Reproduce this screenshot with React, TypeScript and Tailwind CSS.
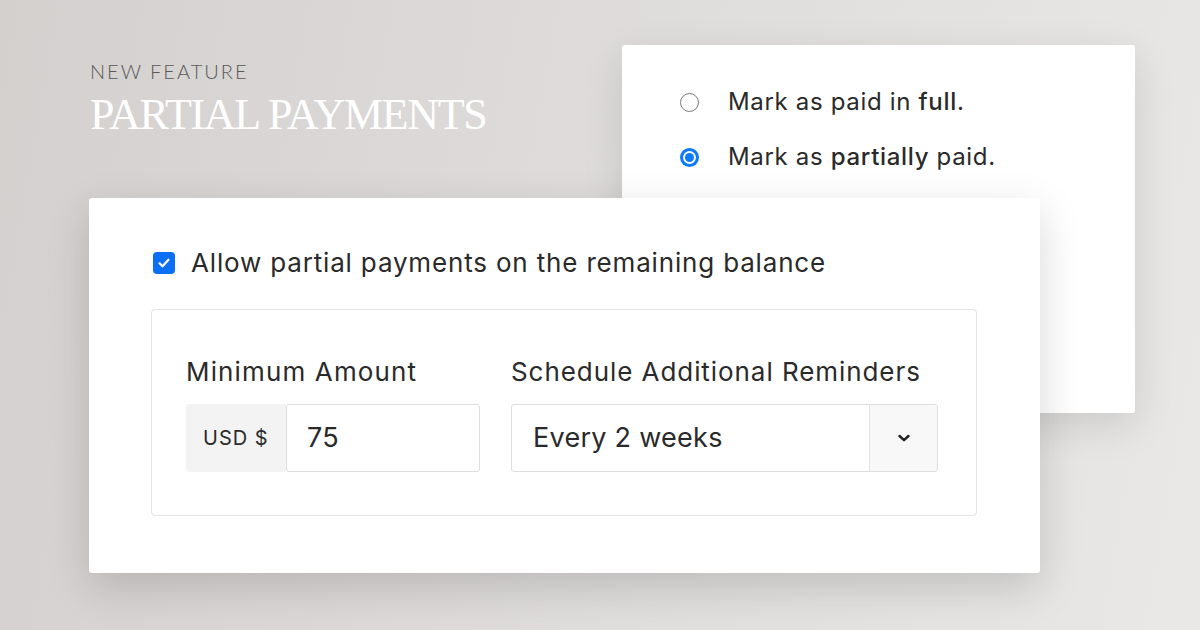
const Radio = ({ checked }: { checked?: boolean }) =>
  checked ? (
    <span className="w-[19px] h-[19px] rounded-full bg-[#0a7aff] flex items-center justify-center shrink-0">
      <span className="w-[13px] h-[13px] rounded-full bg-white flex items-center justify-center">
        <span className="w-[9px] h-[9px] rounded-full bg-[#0a7aff]" />
      </span>
    </span>
  ) : (
    <span className="w-[19px] h-[19px] rounded-full border border-[#7a7a7a] bg-white shrink-0" />
  );

const App = () => {
  return (
    <div className="w-[1200px] h-[630px] overflow-hidden bg-[linear-gradient(100deg,#d3d0ce_0%,#e0dedd_55%,#e9e8e7_100%)] font-['Inter',sans-serif] text-[#2a2a2a]">
      <div className="flex pt-[45px]">
        <div className="pl-[90px] pt-[14px]">
          <p className="font-['Lato',sans-serif] font-light text-[20px] tracking-[0.1em] text-[#585858] leading-[24px]">
            NEW FEATURE
          </p>
          <h1 className="mt-[8px] font-['Liberation_Serif',serif] text-[44px] leading-[48px] tracking-[-0.03em] text-white">
            PARTIAL PAYMENTS
          </h1>
        </div>
        <div className="ml-auto mr-[65px] w-[513px] h-[368px] bg-white rounded-[3px] shadow-[0_12px_40px_rgba(0,0,0,0.12)] pl-[58px] pt-[42px]">
          <div className="flex items-center gap-[29px] h-[30px]">
            <Radio />
            <span className="text-[24px] leading-[30px] tracking-[0.028em]">
              Mark as paid in <span className="font-medium">full</span>.
            </span>
          </div>
          <div className="flex items-center gap-[29px] h-[30px] mt-[25px]">
            <Radio checked />
            <span className="text-[24px] leading-[30px] tracking-[0.028em]">
              Mark as <span className="font-medium">partially</span> paid.
            </span>
          </div>
        </div>
      </div>

      <div className="relative z-10 mt-[-215px] ml-[89px] w-[951px] h-[375px] bg-white rounded-[3px] shadow-[0_14px_44px_rgba(0,0,0,0.16)] pl-[62px] pt-[49px]">
        <div className="flex items-center gap-[16px] h-[32px] pl-[2px]">
          <span className="w-[22px] h-[22px] rounded-[4px] bg-[#0b6ff6] flex items-center justify-center shrink-0">
            <svg width="14" height="14" viewBox="0 0 14 14" fill="none">
              <path d="M2.5 7.3l3 3 6-6.6" stroke="white" strokeWidth="2.2" strokeLinecap="round" strokeLinejoin="round" />
            </svg>
          </span>
          <span className="text-[26px] leading-[32px] tracking-[0.032em]">
            Allow partial payments on the remaining balance
          </span>
        </div>

        <div className="mt-[30px] w-[826px] h-[207px] border border-[#e3e3e3] rounded-[4px] pl-[34px] pt-[46px] flex gap-[31px]">
          <div className="w-[294px]">
            <p className="text-[26px] leading-[32px] tracking-[0.044em]">Minimum Amount</p>
            <div className="mt-[16px] flex h-[68px]">
              <div className="w-[100px] bg-[#f3f3f3] rounded-l-[3px] flex items-center pl-[17px] text-[20px] tracking-[0.05em]">
                USD $
              </div>
              <div className="flex-1 border border-[#dedede] rounded-[3px] flex items-center pl-[20px] text-[27px] tracking-[0.01em]">
                75
              </div>
            </div>
          </div>
          <div className="w-[427px]">
            <p className="text-[26px] leading-[32px] tracking-[0.036em]">Schedule Additional Reminders</p>
            <div className="mt-[16px] flex h-[68px] border border-[#dedede] rounded-[3px]">
              <div className="flex-1 flex items-center pl-[21px] text-[27px] tracking-[0.01em]">Every 2 weeks</div>
              <div className="w-[68px] bg-[#f8f8f8] border-l border-[#e3e3e3] flex items-center justify-center rounded-r-[3px]">
                <svg width="14" height="10" viewBox="0 0 14 10" fill="none">
                  <path d="M2.5 3l4.5 4.2L11.5 3" stroke="#222" strokeWidth="2.4" strokeLinecap="round" strokeLinejoin="round" />
                </svg>
              </div>
            </div>
          </div>
        </div>
      </div>
    </div>
  );
};

export default App;
